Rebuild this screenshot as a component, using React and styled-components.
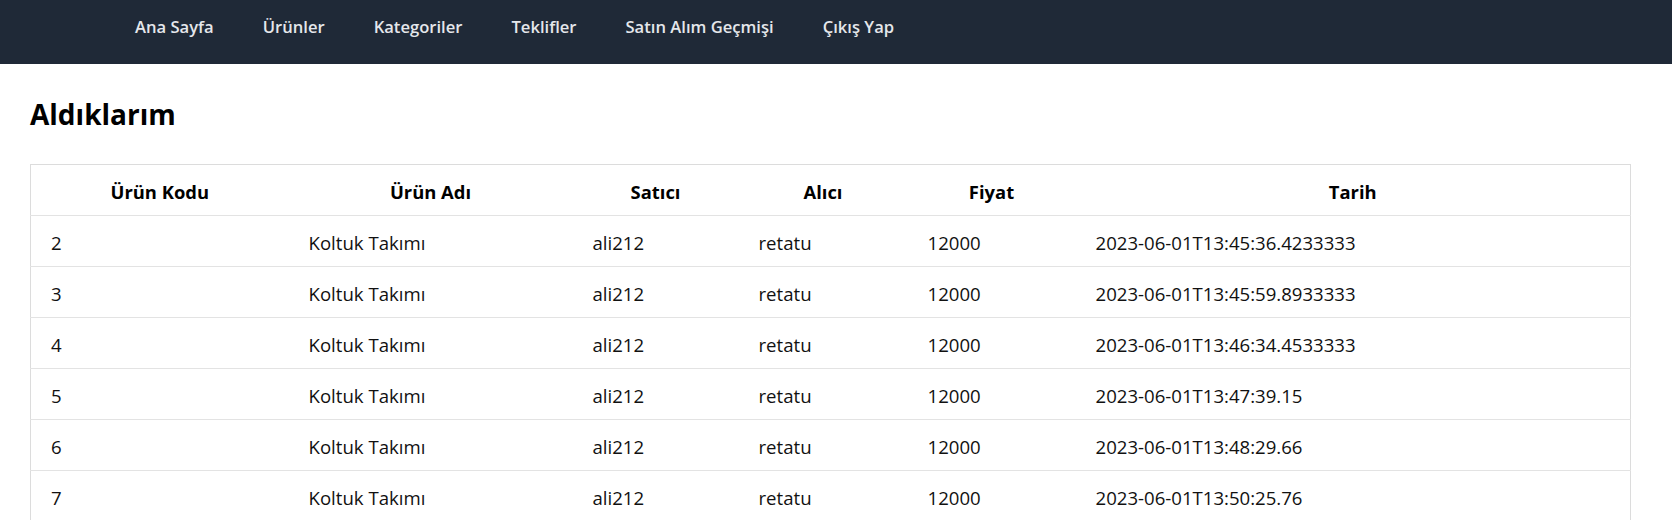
import React from "react";
import styled, { createGlobalStyle } from "styled-components";

const GlobalStyle = createGlobalStyle`
  * { box-sizing: border-box; }
  body {
    margin: 0;
    background: #fff;
    font-family: "Open Sans", "Noto Sans", sans-serif;
    color: #111;
  }
`;

const Navbar = styled.nav`
  height: 64px;
  background-color: #1f2937;
  display: flex;
  align-items: flex-start;
  gap: 49px;
  padding: 17px 0 0 135px;
`;

const NavItem = styled.a`
  color: #e5e7eb;
  font-size: 16.6px;
  font-weight: 600;
  line-height: 20px;
  text-decoration: none;
  cursor: pointer;
`;

const Main = styled.main`
  padding: 0 43px 0 30px;
`;

const Title = styled.h1`
  font-size: 28px;
  font-weight: 700;
  margin: 0;
  padding: 30px 0 30px;
  line-height: 40px;
  color: #000;
`;

const Table = styled.table`
  width: 1600px;
  border-collapse: collapse;
  table-layout: fixed;
  border: 1px solid #dcdcdc;
`;

const Th = styled.th`
  width: ${(p) => p.w}px;
  height: 51px;
  font-size: 18.4px;
  font-weight: 700;
  text-align: center;
  color: #000;
  border-bottom: 1px solid #e3e3e3;
  padding: 2px 0 0;
`;

const Row = styled.tr`
  border-bottom: 1px solid #e3e3e3;
`;

const Td = styled.td`
  height: 51px;
  font-size: 18.6px;
  padding: 3px 20px 0;
  color: #111;
  white-space: nowrap;
`;

const navLinks = [
  "Ana Sayfa",
  "Ürünler",
  "Kategoriler",
  "Teklifler",
  "Satın Alım Geçmişi",
  "Çıkış Yap",
];

const columns = [
  ["Ürün Kodu", 258],
  ["Ürün Adı", 284],
  ["Satıcı", 166],
  ["Alıcı", 169],
  ["Fiyat", 168],
  ["Tarih", 555],
];

const purchases = [
  [2, "2023-06-01T13:45:36.4233333"],
  [3, "2023-06-01T13:45:59.8933333"],
  [4, "2023-06-01T13:46:34.4533333"],
  [5, "2023-06-01T13:47:39.15"],
  [6, "2023-06-01T13:48:29.66"],
  [7, "2023-06-01T13:50:25.76"],
];

const App = () => {
  return (
    <>
      <GlobalStyle />
      <Navbar>
        {navLinks.map((label) => (
          <NavItem key={label}>{label}</NavItem>
        ))}
      </Navbar>
      <Main>
        <Title>Aldıklarım</Title>
        <Table>
          <thead>
            <tr>
              {columns.map(([label, w]) => (
                <Th key={label} w={w}>
                  {label}
                </Th>
              ))}
            </tr>
          </thead>
          <tbody>
            {purchases.map(([id, date]) => (
              <Row key={id}>
                <Td>{id}</Td>
                <Td>Koltuk Takımı</Td>
                <Td>ali212</Td>
                <Td>retatu</Td>
                <Td>12000</Td>
                <Td>{date}</Td>
              </Row>
            ))}
          </tbody>
        </Table>
      </Main>
    </>
  );
};

export default App;
